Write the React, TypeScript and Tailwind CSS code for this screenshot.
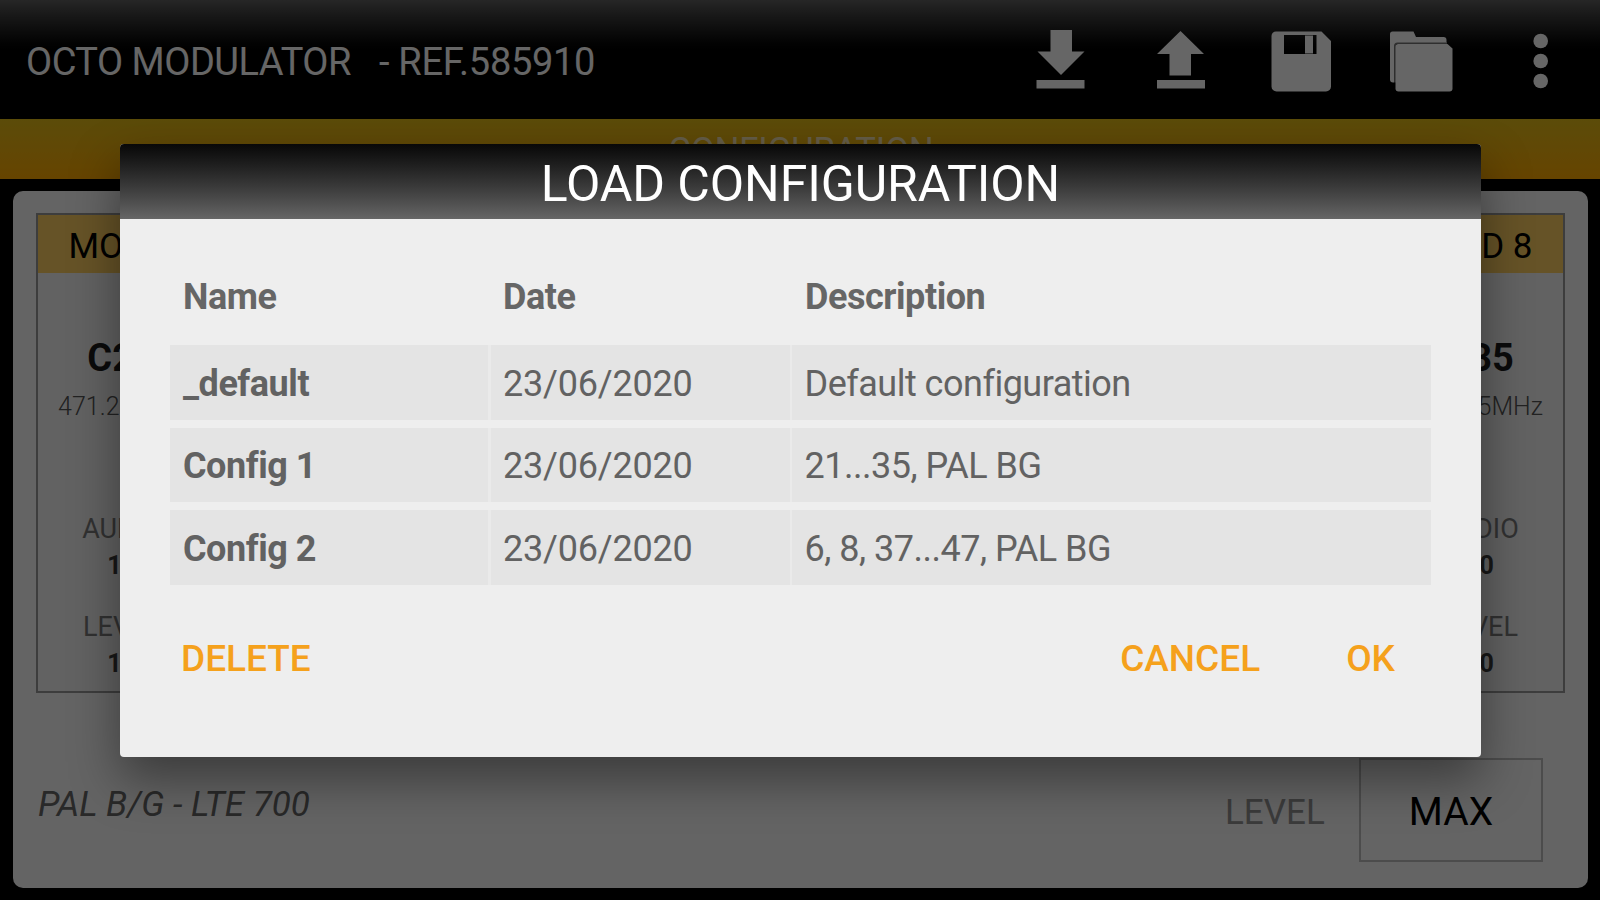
import React from 'react';

interface ModuleCardProps {
  title: string;
  channel: string;
  frequency: string;
  audio: string;
  level: string;
}

function ModuleCard({ title, channel, frequency, audio, level }: ModuleCardProps) {
  return (
    <div className="flex w-[167px] flex-col items-center">
      <div className="flex h-[58px] w-full items-center justify-center bg-[#ffd061] pt-[5px] text-[35px] leading-[53px] text-black">
        {title}
      </div>
      <div className="mt-[63px] text-[38px] leading-[44px] font-bold text-[#1c1c1c]">{channel}</div>
      <div className="mt-[11px] text-[25px] leading-[32px] font-light text-[#555555]">{frequency}</div>
      <div className="mt-[90px] text-[27px] leading-[32px] text-[#7c7c7c]">AUDIO</div>
      <div className="mt-[5px] text-[25px] leading-[31px] font-bold text-[#3c3c3c]">{audio}</div>
      <div className="mt-[31px] text-[27px] leading-[31px] text-[#7c7c7c]">LEVEL</div>
      <div className="mt-[5px] text-[25px] leading-[31px] font-bold text-[#3c3c3c]">{level}</div>
    </div>
  );
}

function ToolbarIcons() {
  return (
    <svg width="480" height="80" viewBox="1020 20 480 80" fill="#ffffff">
      <path d="M1050.500 30h21.500v21.500h12.500l-23.500 23.500-23.500-23.500h13z" />
      <path d="M1036.500 80h48v8.500h-48z" />
      <path d="M1180.500 31l23.500 23h-13v21.500h-21.500v-21.500h-12.500z" />
      <path d="M1157 80h48v8.500h-48z" />
      <path
        fillRule="evenodd"
        d="M1276 31.500h45.500l9.500 9.500v45.500a5 5 0 0 1-5 5h-49.500a5 5 0 0 1-5-5v-50.500a4.500 4.500 0 0 1 4.500-4.500zM1284 35v19h32.500v-19zM1305 35.500h8v18h-8z"
      />
      <path d="M1392.500 31.500h21l2.500 5.500h27.500a3 3 0 0 1 3 3v2.500h-49a3.500 3.500 0 0 0-3.500 3.500v36.500h-1a3 3 0 0 1-3-3v-45.500a2.500 2.500 0 0 1 2.500-2.500z" />
      <path d="M1398.500 44h49l5 4.500v40a3 3 0 0 1-3 3h-51a3 3 0 0 1-3-3v-41.500a3 3 0 0 1 3-3z" />
      <path d="M1394 42h53v2.500h-51v38h-2z" opacity="0.45" />
    </svg>
  );
}

function Dots() {
  return (
    <svg width="16" height="60" viewBox="0 0 16 60" fill="#ffffff">
      <circle cx="7.700" cy="11" r="7.300" />
      <circle cx="7.700" cy="31" r="7.300" />
      <circle cx="7.700" cy="51" r="7.300" />
    </svg>
  );
}

const configs = [
  { name: '_default', date: '23/06/2020', description: 'Default configuration' },
  { name: 'Config 1', date: '23/06/2020', description: '21...35, PAL BG' },
  { name: 'Config 2', date: '23/06/2020', description: '6, 8, 37...47, PAL BG' },
];

function LoadDialog() {
  return (
    <div className="flex h-[613px] w-[1361px] flex-col overflow-hidden rounded-[4px] bg-[#eeeeee] shadow-[0_22px_50px_rgba(0,0,0,0.42)]">
      <div className="flex h-[75px] items-center justify-center bg-linear-to-b from-[#080808] to-[#666666] pt-[5px] text-[50px] leading-none tracking-[-0.100px] text-white">
        LOAD CONFIGURATION
      </div>
      <div className="grid grid-cols-[320px_302px_1fr] pt-[56px] pr-[49px] pl-[63px] text-[36px] leading-[44px] font-bold tracking-[-0.450px] text-[#666666]">
        <div>Name</div>
        <div>Date</div>
        <div>Description</div>
      </div>
      <div className="flex flex-col gap-[8px] pt-[26px] pr-[50px] pl-[50px] text-[36px] leading-[71px] text-[#626262]">
        {configs.map((config) => (
          <div key={config.name} className="grid h-[74.500px] grid-cols-[318px_299px_1fr] gap-x-[2.500px] bg-[#eaeaea]">
            <div className="bg-[#e4e4e4] pt-[3.500px] pl-[13px] font-bold tracking-[-0.450px]">{config.name}</div>
            <div className="bg-[#e4e4e4] pt-[3.500px] pl-[12.500px] tracking-[-0.200px]">{config.date}</div>
            <div className="bg-[#e4e4e4] pt-[3.500px] pl-[12.500px] tracking-[-0.500px]">{config.description}</div>
          </div>
        ))}
      </div>
      <div className="flex pt-[52px] pr-[86px] pl-[61px] text-[37px] leading-[44px] font-medium text-[#f5a11c]">
        <button className="mr-auto">DELETE</button>
        <button className="mr-[86px]">CANCEL</button>
        <button>OK</button>
      </div>
    </div>
  );
}

export default function App() {
  return (
    <div className="relative h-[900px] w-[1600px] overflow-hidden bg-black font-['Roboto',sans-serif]">
      <header className="flex h-[119px] items-center bg-linear-to-b from-[#606060] to-black to-50% pl-[26px] text-[38px] text-white">
        <span className="w-[353px] pt-[6px] tracking-[-0.500px]">OCTO MODULATOR</span>
        <span className="pt-[6px] tracking-[-0.300px]">- REF.585910</span>
        <div className="ml-auto flex items-center gap-[33px] pr-[51px]">
          <ToolbarIcons />
          <Dots />
        </div>
      </header>
      <div className="flex h-[60px] justify-center bg-linear-to-b from-[#e4bd18] to-[#ffaa00] pt-[9px] pl-[2px] text-[34.500px] leading-[44px] text-white/70">
        CONFIGURATION
      </div>
      <main className="mt-[12px] ml-[13px] flex h-[697px] w-[1575px] flex-col rounded-[10px] bg-[#fbfbfb] px-[23px] pt-[22px]">
        <div className="flex h-[480px] w-[1529px] justify-between border-2 border-[#9a9a9a] bg-[#f4f4f4]">
          <ModuleCard title="MOD 1" channel="C21" frequency="471.25MHz" audio="10" level="10" />
          <ModuleCard title="MOD 8" channel="C35" frequency="583.25MHz" audio="10" level="10" />
        </div>
        <div className="flex pt-[65px] pl-[2px]">
          <div className="mr-auto pt-[25px] text-[35px] leading-[44px] text-[#666666] italic">PAL B/G - LTE 700</div>
          <div className="w-[134px] pt-[33px] text-[35px] leading-[44px] text-[#949494]">LEVEL</div>
          <div className="mr-[22px] h-[104px] w-[184px] border-2 border-[#bdbdbd] text-center text-[39px] leading-[104px] text-black">
            MAX
          </div>
        </div>
      </main>
      <div className="absolute inset-0 bg-black/60 pt-[144px] pl-[120px]">
        <LoadDialog />
      </div>
    </div>
  );
}
